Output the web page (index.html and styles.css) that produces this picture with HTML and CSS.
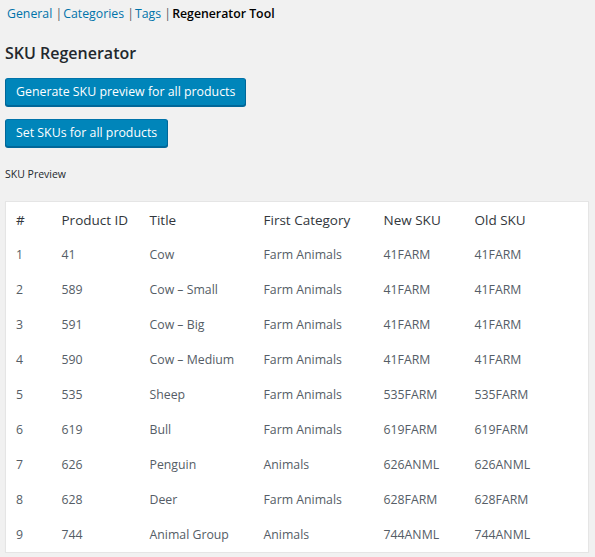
FILE: index.html
```html
<!DOCTYPE html>
<html>
<head>
<meta charset="utf-8">
<link rel="stylesheet" href="styles.css">
</head>
<body>
<ul class="subsubsub">
  <li><a href="#">General</a> |</li>
  <li><a href="#">Categories</a> |</li>
  <li><a href="#">Tags</a> |</li>
  <li><span class="current">Regenerator Tool</span></li>
</ul>
<h2 class="title">SKU Regenerator</h2>
<div class="actions">
  <button class="btn">Generate SKU preview for all products</button>
  <button class="btn">Set SKUs for all products</button>
</div>
<p class="caption">SKU Preview</p>
<table class="preview">
  <colgroup>
    <col class="c1"><col class="c2"><col class="c3"><col class="c4"><col class="c5"><col class="c6">
  </colgroup>
  <thead>
    <tr><th>#</th><th>Product ID</th><th>Title</th><th>First Category</th><th>New SKU</th><th>Old SKU</th></tr>
  </thead>
  <tbody>
    <tr><td>1</td><td>41</td><td>Cow</td><td>Farm Animals</td><td>41FARM</td><td>41FARM</td></tr>
    <tr><td>2</td><td>589</td><td>Cow – Small</td><td>Farm Animals</td><td>41FARM</td><td>41FARM</td></tr>
    <tr><td>3</td><td>591</td><td>Cow – Big</td><td>Farm Animals</td><td>41FARM</td><td>41FARM</td></tr>
    <tr><td>4</td><td>590</td><td>Cow – Medium</td><td>Farm Animals</td><td>41FARM</td><td>41FARM</td></tr>
    <tr><td>5</td><td>535</td><td>Sheep</td><td>Farm Animals</td><td>535FARM</td><td>535FARM</td></tr>
    <tr><td>6</td><td>619</td><td>Bull</td><td>Farm Animals</td><td>619FARM</td><td>619FARM</td></tr>
    <tr><td>7</td><td>626</td><td>Penguin</td><td>Animals</td><td>626ANML</td><td>626ANML</td></tr>
    <tr><td>8</td><td>628</td><td>Deer</td><td>Farm Animals</td><td>628FARM</td><td>628FARM</td></tr>
    <tr><td>9</td><td>744</td><td>Animal Group</td><td>Animals</td><td>744ANML</td><td>744ANML</td></tr>
  </tbody>
</table>
</body>
</html>
```
FILE: styles.css
```css
html, body {
  margin: 0;
  padding: 0;
  background: #f1f1f1;
}
body {
  font-family: "Open Sans", "Noto Sans", sans-serif;
  font-size: 12.3px;
  color: #23282d;
  padding: 4px 6px 0 5px;
}
.subsubsub {
  list-style: none;
  margin: 0;
  padding: 0 0 0 2px;
  display: flex;
  height: 20px;
  line-height: 20px;
  color: #555d66;
  font-size: 12.3px;
}
.subsubsub li {
  white-space: pre;
  margin-right: 1px;
}
.subsubsub a {
  color: #0073aa;
  text-decoration: none;
}
.subsubsub .current {
  color: #000;
  font-weight: 600;
}
.title {
  margin: 17px 0 0 0;
  font-size: 16px;
  line-height: 24px;
  font-weight: 600;
  color: #23282d;
}
.actions {
  margin-top: 13px;
  display: flex;
  flex-direction: column;
  align-items: flex-start;
  gap: 13px;
}
.btn {
  font-family: inherit;
  font-size: 12.35px;
  height: 28px;
  line-height: 26px;
  padding: 0 10px;
  background: #0085ba;
  border: 1px solid #0073aa;
  border-color: #0073aa #006799 #006799;
  border-radius: 3px;
  box-shadow: 0 1px 0 #006799;
  color: #fff;
  cursor: pointer;
}
.caption {
  margin: 20px 0 0 0;
  font-size: 10.5px;
  line-height: 14px;
  color: #23282d;
}
.preview {
  margin-top: 20px;
  width: 584px;
  table-layout: fixed;
  border-collapse: collapse;
  background: #fff;
  border: 1px solid #e5e5e5;
  box-shadow: 0 1px 1px rgba(0,0,0,.04);
  color: #555d66;
}
.c1 { width: 46px; }
.c2 { width: 88px; }
.c3 { width: 114px; }
.c4 { width: 120px; }
.c5 { width: 91px; }
.preview th, .preview td {
  text-align: left;
  font-weight: 400;
  padding: 0 10px;
  height: 35px;
  line-height: 18px;
  white-space: nowrap;
  font-size: 12.3px;
}
.preview th {
  color: #32373c;
  font-size: 13.5px;
}
```
